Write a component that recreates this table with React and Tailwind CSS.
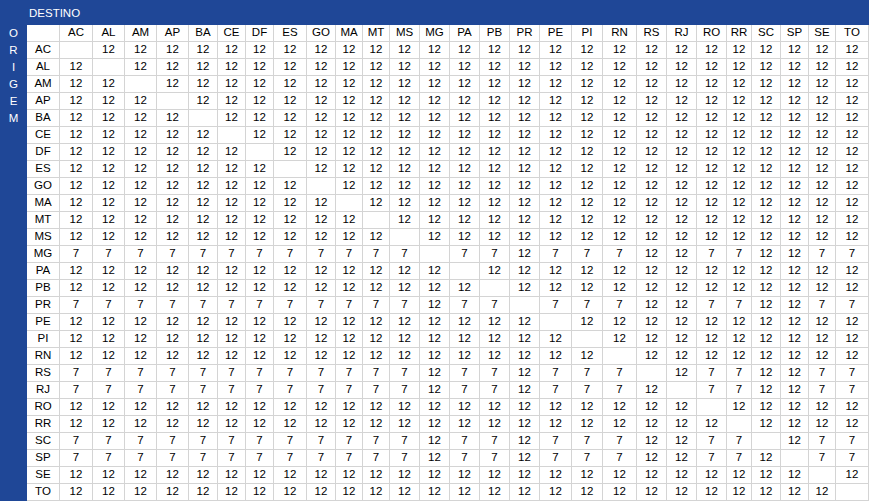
const UFS = [
  'AC', 'AL', 'AM', 'AP', 'BA', 'CE', 'DF', 'ES', 'GO', 'MA', 'MT', 'MS', 'MG', 'PA',
  'PB', 'PR', 'PE', 'PI', 'RN', 'RS', 'RJ', 'RO', 'RR', 'SC', 'SP', 'SE', 'TO',
]

// Sul/Sudeste (exceto ES) -> 7% para os demais, 12% entre si
const SUL_SUDESTE = new Set(['MG', 'PR', 'RS', 'RJ', 'SC', 'SP'])

function aliquota(origem, destino) {
  if (origem === destino) return ''
  if (SUL_SUDESTE.has(origem) && !SUL_SUDESTE.has(destino)) return 7
  return 12
}

const ORIGEM = ['O', 'R', 'I', 'G', 'E', 'M']

const cell = 'h-[17px] flex items-center justify-center border-r border-b border-[#d4d4d4] leading-none'

export default function App() {
  return (
    <div
      className="w-[869px] h-[501px] overflow-hidden bg-white text-[11.5px] text-black flex flex-col"
      style={{ fontFamily: '"Liberation Sans", Arial, sans-serif' }}
    >
      <div className="h-[25px] shrink-0 bg-[#1f4797] text-white flex items-end pl-[29px] pb-[3px]">
        DESTINO
      </div>

      <div className="flex flex-1 min-h-0">
        <div className="w-[27px] shrink-0 bg-[#1f4797] text-white flex flex-col">
          {ORIGEM.map((l, i) => (
            <div key={i} className="h-[17px] flex items-center justify-center">
              {l}
            </div>
          ))}
        </div>

        <div className="flex-1 grid grid-cols-[33px_33px_32px_32px_32px_29px_28px_28px_33px_29px_27px_27px_30px_30px_30px_30px_30px_32px_31px_34px_30px_30px_30px_25px_29px_28px_27px_33px] auto-rows-[17px]">
          <div className={cell} />
          {UFS.map((uf) => (
            <div key={'h' + uf} className={cell}>
              {uf}
            </div>
          ))}

          {UFS.map((orig) => [
            <div key={'r' + orig} className={cell}>
              {orig}
            </div>,
            ...UFS.map((dest) => (
              <div key={orig + dest} className={cell}>
                {aliquota(orig, dest)}
              </div>
            )),
          ])}
        </div>
      </div>
    </div>
  )
}
